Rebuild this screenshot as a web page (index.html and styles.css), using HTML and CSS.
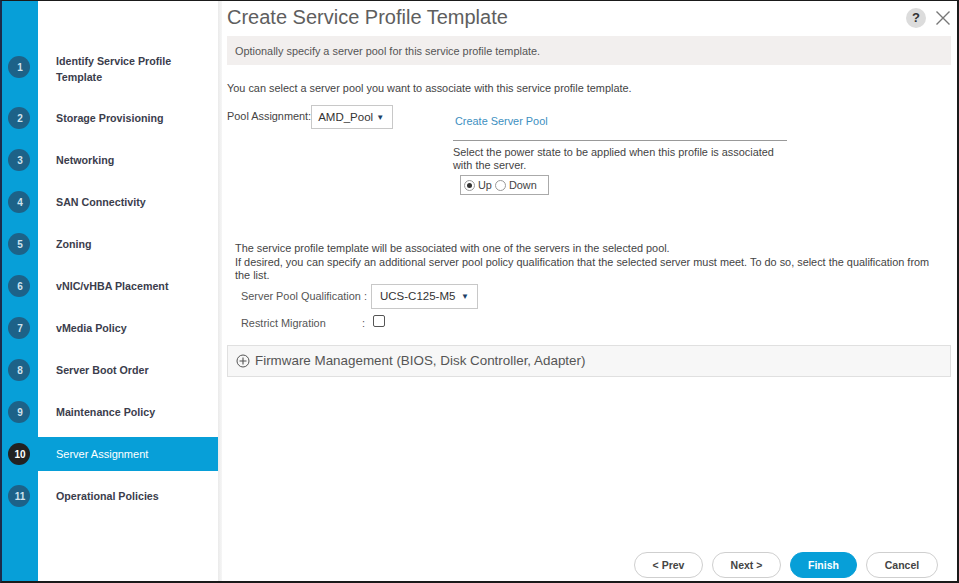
FILE: index.html
```html
<!DOCTYPE html>
<html>
<head>
<meta charset="utf-8">
<link rel="stylesheet" href="styles.css">
</head>
<body>
<div class="frame">
  <nav class="steps">
    <div class="step step-tall"><span class="num">1</span><span class="label">Identify Service Profile<br>Template</span></div>
    <div class="step"><span class="num">2</span><span class="label">Storage Provisioning</span></div>
    <div class="step"><span class="num">3</span><span class="label">Networking</span></div>
    <div class="step"><span class="num">4</span><span class="label">SAN Connectivity</span></div>
    <div class="step"><span class="num">5</span><span class="label">Zoning</span></div>
    <div class="step"><span class="num">6</span><span class="label">vNIC/vHBA Placement</span></div>
    <div class="step"><span class="num">7</span><span class="label">vMedia Policy</span></div>
    <div class="step"><span class="num">8</span><span class="label">Server Boot Order</span></div>
    <div class="step"><span class="num">9</span><span class="label">Maintenance Policy</span></div>
    <div class="step active"><span class="num">10</span><span class="label">Server Assignment</span></div>
    <div class="step"><span class="num">11</span><span class="label">Operational Policies</span></div>
  </nav>
  <div class="divider"></div>
  <main class="main">
    <header class="head">
      <h1 class="title">Create Service Profile Template</h1>
      <div class="head-icons">
        <span class="help">?</span>
        <svg class="close" width="16" height="16" viewBox="0 0 16 16"><path d="M1.5 1.5 L14.5 14.5 M14.5 1.5 L1.5 14.5" stroke="#777" stroke-width="1.4" fill="none"/></svg>
      </div>
    </header>
    <div class="info">Optionally specify a server pool for this service profile template.</div>
    <p class="intro">You can select a server pool you want to associate with this service profile template.</p>
    <div class="pool">
      <div class="pool-left">
        <span class="pool-label">Pool Assignment:</span>
        <span class="select sel-pool">AMD_Pool<span class="caret">&#9660;</span></span>
      </div>
      <div class="pool-right">
        <a class="link">Create Server Pool</a>
        <div class="rule"></div>
        <p class="power">Select the power state to be applied when this profile is associated<br>with the server.</p>
        <div class="radios">
          <span class="radio on"></span><span class="rlabel">Up</span>
          <span class="radio"></span><span class="rlabel">Down</span>
        </div>
      </div>
    </div>
    <p class="assoc">The service profile template will be associated with one of the servers in the selected pool.<br>If desired, you can specify an additional server pool policy qualification that the selected server must meet. To do so, select the qualification from<br>the list.</p>
    <div class="qual">
      <span class="qlabel">Server Pool Qualification :</span>
      <span class="select sel-qual">UCS-C125-M5<span class="caret">&#9660;</span></span>
    </div>
    <div class="restrict">
      <span class="rmlabel">Restrict Migration</span>
      <span class="colon">:</span>
      <span class="check"></span>
    </div>
    <div class="firmware">
      <svg class="plus" width="14" height="14" viewBox="0 0 14 14"><circle cx="7" cy="7" r="6" fill="none" stroke="#555" stroke-width="1"/><path d="M7 3.5 V10.5 M3.5 7 H10.5" stroke="#555" stroke-width="1.1"/></svg>
      <span>Firmware Management (BIOS, Disk Controller, Adapter)</span>
    </div>
    <footer class="foot">
      <button class="btn">&lt; Prev</button>
      <button class="btn">Next &gt;</button>
      <button class="btn primary">Finish</button>
      <button class="btn">Cancel</button>
    </footer>
  </main>
</div>
</body>
</html>
```

FILE: styles.css
```css
* { box-sizing: border-box; }
html, body { margin: 0; padding: 0; }
body {
  width: 959px;
  height: 583px;
  overflow: hidden;
  font-family: "Liberation Sans", Arial, sans-serif;
  background: #fff;
}
.frame {
  width: 959px;
  height: 583px;
  display: flex;
  border-top: 1px solid #1a1a1a;
  border-left: 2px solid #1c2b4a;
  border-right: 2px solid #1a1a1a;
  border-bottom: 2px solid #1a1a1a;
}
.steps {
  width: 216px;
  flex: none;
  padding-top: 40px;
  background: linear-gradient(to right, #079fd8 0, #079fd8 36px, #fff 36px);
  display: flex;
  flex-direction: column;
  gap: 8px;
}
.step {
  display: flex;
  height: 34px;
  align-items: stretch;
}
.step-tall { height: 52px; }
.num {
  width: 36px;
  flex: none;
  display: flex;
  align-items: center;
  justify-content: center;
  position: relative;
  isolation: isolate;
  font-size: 10px;
  font-weight: bold;
  color: #cfe3ee;
}
.num::before {
  content: "";
  position: absolute;
  width: 22px;
  height: 22px;
  border-radius: 50%;
  background: #1d6288;
  left: 6px;
  top: 50%;
  margin-top: -11px;
  z-index: -1;
}
.label {
  flex: 1;
  display: flex;
  align-items: center;
  padding-left: 18px;
  font-size: 10.7px;
  font-weight: bold;
  line-height: 16px;
  color: #3b3d4c;
}
.step-tall .label { display: block; padding-top: 12px; }
.active .label {
  background: #079fd8;
  color: #fff;
  font-weight: normal;
  font-size: 11px;
}
.active .num { color: #fff; }
.active .num::before { background: #222; }
.divider {
  width: 4px;
  flex: none;
  background: linear-gradient(to right, #eaeaea, #f6f6f6);
}
.main {
  flex: 1;
  display: flex;
  flex-direction: column;
  padding: 0 6px 0 5px;
  color: #555;
}
.head {
  height: 33px;
  display: flex;
  align-items: center;
  justify-content: space-between;
}
.title {
  margin: 0;
  font-size: 20px;
  font-weight: normal;
  color: #5e5e5e;
}
.head-icons {
  display: flex;
  align-items: center;
  gap: 9px;
  padding-right: 0;
}
.help {
  width: 20px;
  height: 20px;
  border-radius: 50%;
  background: #dcdcdc;
  color: #333;
  font-weight: bold;
  font-size: 13px;
  display: flex;
  align-items: center;
  justify-content: center;
}
.info {
  height: 29px;
  margin-top: 2px;
  background: #f2efee;
  font-size: 10.9px;
  color: #555;
  padding-left: 8px;
  display: flex;
  align-items: center;
}
.intro {
  margin: 17px 0 0;
  font-size: 10.9px;
  line-height: 13px;
  color: #444;
}
.pool {
  display: flex;
  margin-top: 10px;
}
.pool-left {
  width: 226px;
  flex: none;
  display: flex;
  align-items: flex-start;
}
.pool-label {
  font-size: 10.9px;
  color: #444;
  margin-top: 5px;
}
.select {
  display: flex;
  align-items: center;
  justify-content: space-between;
  border: 1px solid #c8c8c8;
  font-size: 11.5px;
  color: #333;
  background: #fff;
}
.sel-pool {
  width: 82px;
  height: 24px;
  padding: 0 8px 0 6px;
}
.caret {
  font-size: 8px;
  color: #1d3f66;
}
.pool-right {
  width: 334px;
  display: flex;
  flex-direction: column;
}
.link {
  font-size: 10.9px;
  line-height: 13px;
  color: #3d8fbf;
  margin-top: 10px;
  padding-left: 2px;
}
.rule {
  height: 1px;
  background: #999;
  margin-top: 12px;
}
.power {
  margin: 5px 0 0;
  font-size: 10.9px;
  line-height: 13px;
  color: #444;
}
.radios {
  align-self: flex-start;
  margin-left: 7px;
  margin-top: 3px;
  width: 89px;
  height: 20px;
  border: 1px solid #aaa;
  display: flex;
  align-items: center;
  padding-left: 3px;
  font-size: 10.9px;
  color: #444;
}
.radio {
  width: 11px;
  height: 11px;
  border: 1px solid #999;
  border-radius: 50%;
  position: relative;
  margin-right: 3px;
}
.radio.on::after {
  content: "";
  position: absolute;
  width: 5px;
  height: 5px;
  background: #333;
  border-radius: 50%;
  left: 2px;
  top: 2px;
}
.rlabel { margin-right: 3px; }
.assoc {
  margin: 47px 0 0;
  padding-left: 8px;
  font-size: 10.9px;
  line-height: 13.5px;
  color: #444;
  white-space: nowrap;
}
.qual {
  display: flex;
  align-items: center;
  padding-left: 14px;
  margin-top: 1px;
}
.qlabel {
  font-size: 10.9px;
  color: #555;
  width: 130px;
}
.sel-qual {
  width: 107px;
  height: 25px;
  padding: 0 8px;
}
.restrict {
  display: flex;
  align-items: center;
  padding-left: 14px;
  margin-top: 8px;
  font-size: 10.9px;
  color: #555;
}
.rmlabel { width: 121px; }
.colon { width: 11px; }
.check {
  width: 12px;
  height: 12px;
  border: 1px solid #555;
  border-radius: 2px;
  margin-top: -3px;
}
.firmware {
  margin-top: 16px;
  height: 32px;
  border: 1px solid #e0e0e0;
  background: #f7f7f7;
  display: flex;
  align-items: center;
  padding-left: 8px;
  gap: 5px;
  font-size: 13.4px;
  color: #555;
}
.foot {
  margin-top: auto;
  display: flex;
  justify-content: flex-end;
  gap: 9px;
  padding-right: 13px;
  padding-bottom: 3px;
}
.btn {
  height: 26px;
  border: 1px solid #cfcfcf;
  border-radius: 13px;
  background: #fff;
  font-family: "Liberation Sans", Arial, sans-serif;
  font-size: 10.5px;
  font-weight: bold;
  color: #444;
  width: 69px;
  padding: 0;
}
.btn.primary {
  background: #079fd8;
  border-color: #079fd8;
  color: #fff;
  width: 67px;
}
.btn:last-child { width: 72px; }
```
